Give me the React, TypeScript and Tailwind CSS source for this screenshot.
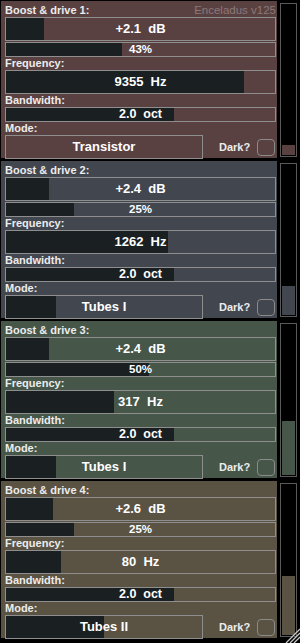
import React from "react";

type Band = {
  n: number;
  bg: string;
  gain: string;
  gainFill: number;
  drive: number;
  driveFill: number;
  freq: string;
  freqFill: number;
  mode: string;
  modeFill: number;
  meter: number;
};

const bands: Band[] = [
  { n: 1, bg: "bg-[#5a4141]", gain: "+2.1", gainFill: 38, drive: 43, driveFill: 116, freq: "9355", freqFill: 238, mode: "Transistor", modeFill: 0, meter: 10 },
  { n: 2, bg: "bg-[#42464f]", gain: "+2.4", gainFill: 43, drive: 25, driveFill: 68, freq: "1262", freqFill: 162, mode: "Tubes I", modeFill: 50, meter: 29 },
  { n: 3, bg: "bg-[#465649]", gain: "+2.4", gainFill: 43, drive: 50, driveFill: 143, freq: "317", freqFill: 108, mode: "Tubes I", modeFill: 50, meter: 54 },
  { n: 4, bg: "bg-[#5a5343]", gain: "+2.6", gainFill: 47, drive: 25, driveFill: 68, freq: "80", freqFill: 55, mode: "Tubes II", modeFill: 98, meter: 59 },
];

const font = "font-['Liberation_Sans',Arial,sans-serif]";

function Label({ children }: { children: React.ReactNode }) {
  return <div className="h-[13px] text-[11px] leading-[13px] font-bold text-[#ececec]">{children}</div>;
}

// 값 박스: 어두운 채움 + 가운데 텍스트
function Slider({ fill, h, text, size }: { fill: number; h: string; text: string; size: string }) {
  return (
    <div className={`relative ${h} border border-[#8e8e8e]`}>
      <div className="absolute left-0 top-0 bottom-0 bg-[#1a1f22]" style={{ width: fill }} />
      <div className={`relative flex h-full items-center justify-center font-bold text-white whitespace-pre ${size}`}>{text}</div>
    </div>
  );
}

function Panel({ b }: { b: Band }) {
  return (
    <div className={`relative w-[276px] h-[157px] pl-[4px] pr-[1px] pt-[3px] ${b.bg}`}>
      {b.n === 1 && (
        <div className="absolute right-[1px] top-[3px] h-[13px] text-[11.5px] leading-[13px] text-[#8c7878]">Enceladus v125</div>
      )}
      <Label>Boost &amp; drive {b.n}:</Label>
      <Slider fill={b.gainFill} h="h-[24px]" text={`${b.gain}  dB`} size="text-[13px]" />
      <div className="mt-[1px]">
        <Slider fill={b.driveFill} h="h-[15px]" text={`${b.drive}%`} size="text-[11.5px]" />
      </div>
      <Label>Frequency:</Label>
      <Slider fill={b.freqFill} h="h-[24px]" text={`${b.freq}  Hz`} size="text-[13px]" />
      <Label>Bandwidth:</Label>
      <Slider fill={168} h="h-[15px]" text="2.0  oct" size="text-[12.5px]" />
      <Label>Mode:</Label>
      <div className="flex items-center">
        <div className="w-[198px]">
          <Slider fill={b.modeFill} h="h-[24px]" text={b.mode} size="text-[13px]" />
        </div>
        <div className="ml-[16px] text-[11px] font-bold text-[#ececec]">Dark?</div>
        <div className="ml-[7px] w-[18px] h-[17px] rounded-[4px] border-[1.5px] border-[#8a8a8a]" />
      </div>
    </div>
  );
}

function Meter({ b }: { b: Band }) {
  return (
    <div className="mt-[2px] mb-[1px] w-[17px] border border-[#5a5a5a] bg-black p-[1px] flex flex-col justify-end">
      <div className={b.bg} style={{ height: b.meter }} />
    </div>
  );
}

export default function App() {
  return (
    <div className={`relative w-[300px] h-[643px] bg-black pt-[1px] pl-[1px] flex flex-col gap-[3px] ${font}`}>
      {bands.map((b) => (
        <div key={b.n} className="flex gap-[3px]">
          <Panel b={b} />
          <Meter b={b} />
        </div>
      ))}
      {/* 리사이즈 그립 */}
      <svg className="absolute right-0 bottom-0" width="16" height="16" viewBox="0 0 16 16">
        <path d="M16 2 L2 16 M16 6 L6 16 M16 10 L10 16" stroke="#c8c8c8" strokeWidth="1.3" />
        <path d="M16 3 L3 16 M16 7 L7 16 M16 11 L11 16" stroke="#555" strokeWidth="0.8" />
      </svg>
    </div>
  );
}
